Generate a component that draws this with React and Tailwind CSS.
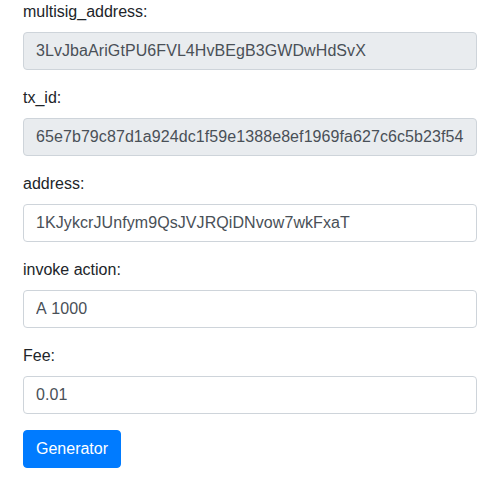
import React from "react";

const fields = [
  { label: "multisig_address:", value: "3LvJbaAriGtPU6FVL4HvBEgB3GWDwHdSvX", disabled: true },
  { label: "tx_id:", value: "65e7b79c87d1a924dc1f59e1388e8ef1969fa627c6c5b23f547a0d3e9b2c41f8", disabled: true },
  { label: "address:", value: "1KJykcrJUnfym9QsJVJRQiDNvow7wkFxaT" },
  { label: "invoke action:", value: "A 1000" },
  { label: "Fee:", value: "0.01" },
];

export default function App() {
  return (
    <div className="bg-white min-h-[495px] pl-[23px] pr-[22px] text-[16px] leading-[24px] text-[#212529]" style={{ fontFamily: '"Liberation Sans", Arial, sans-serif' }}>
      {fields.map((f) => (
        <div key={f.label} className="mb-4">
          <label className="block mb-2">{f.label}</label>
          <input
            readOnly
            value={f.value}
            className={`block w-full h-[38px] px-3 py-[6px] border border-[#ced4da] rounded text-[16px] leading-[24px] text-[#495057] outline-none [font-kerning:none] tracking-[0.08px] ${f.disabled ? "bg-[#e9ecef]" : "bg-white"}`}
            style={{ fontFamily: '"Liberation Sans", Arial, sans-serif' }}
          />
        </div>
      ))}
      <button className="h-[38px] px-3 rounded bg-[#007bff] text-white text-[16px] leading-[24px] border border-[#007bff]">
        Generator
      </button>
    </div>
  );
}
